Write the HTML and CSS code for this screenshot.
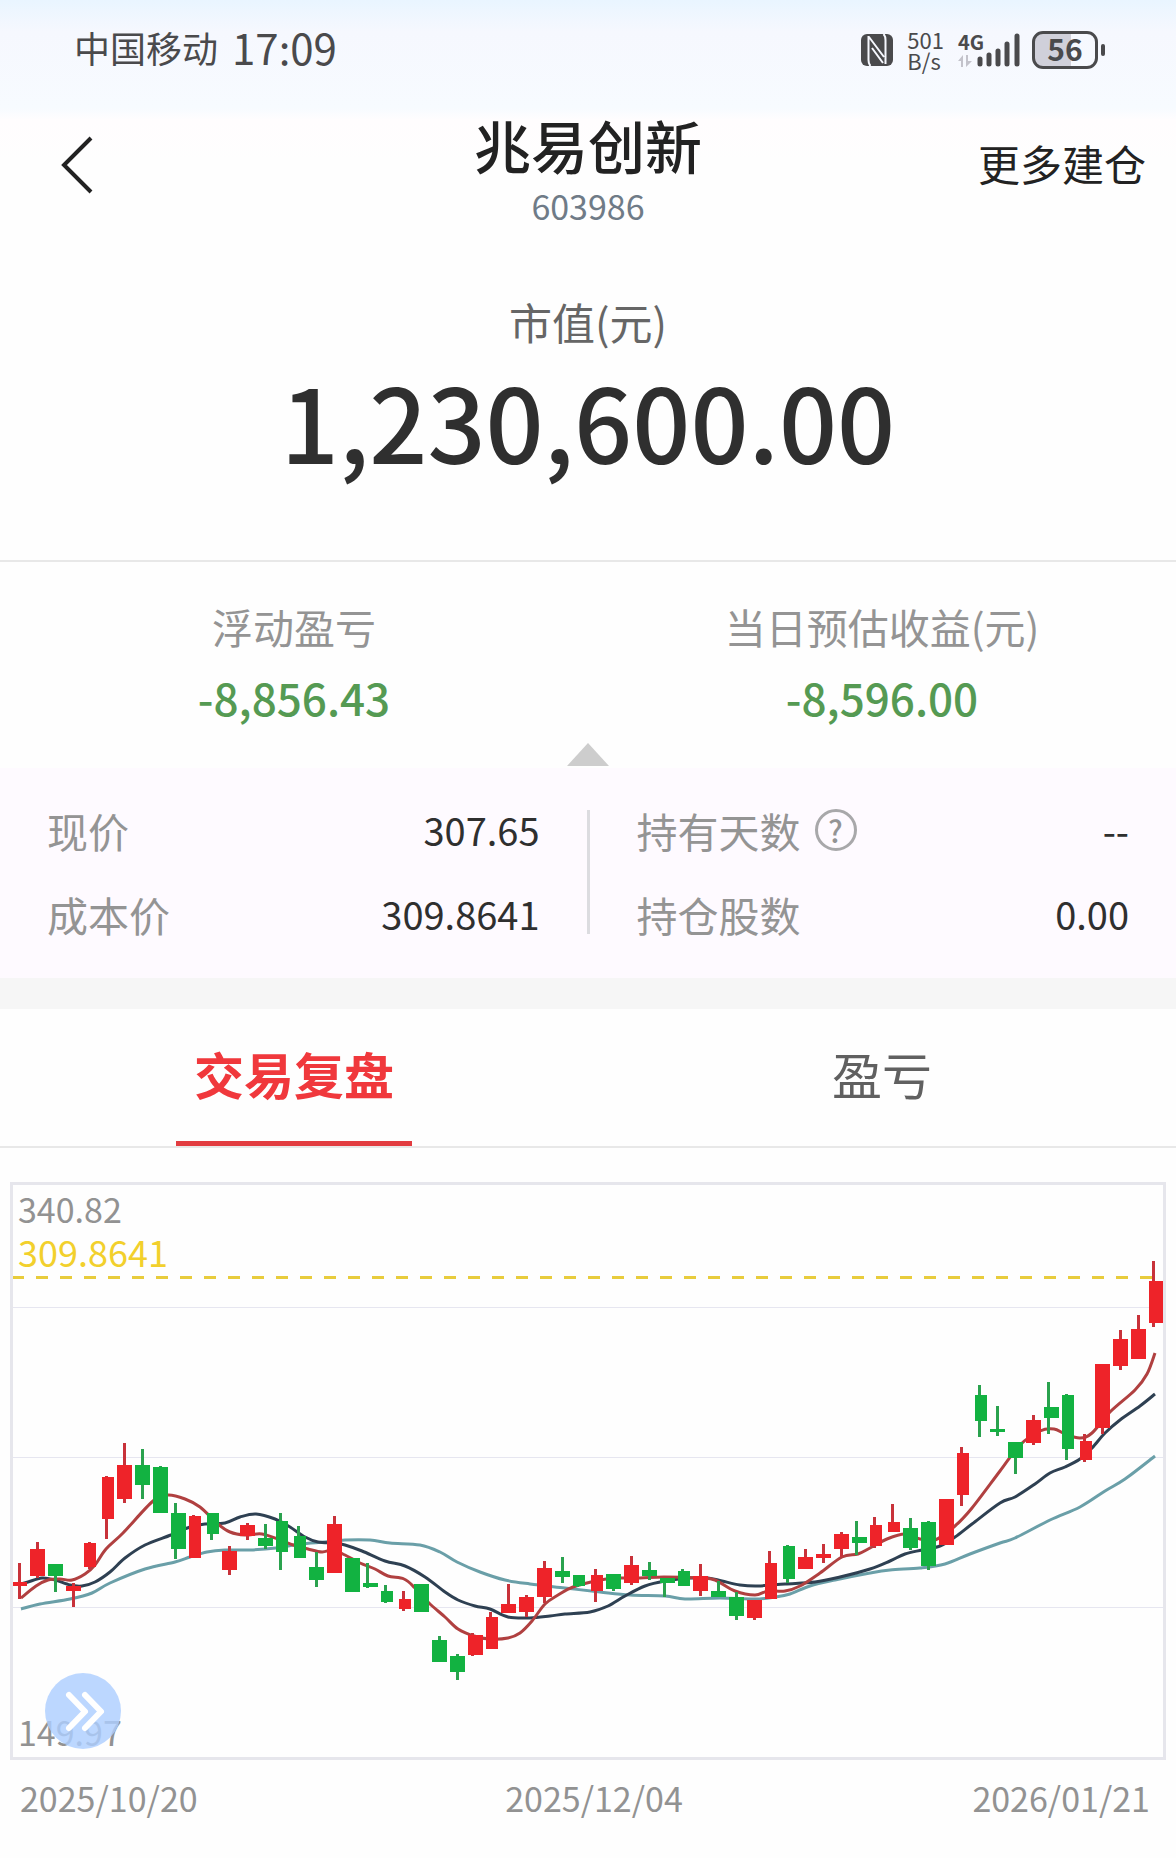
FILE: index.html
```html
<!DOCTYPE html>
<html lang="zh-CN">
<head>
<meta charset="utf-8">
<meta name="viewport" content="width=device-width, initial-scale=1">
<title>兆易创新 603986</title>
<link rel="stylesheet" href="styles.css">
</head>
<body>
<div class="top">
  <div class="status">
    <div class="status-left"><span class="carrier">中国移动</span><span class="clock">17:09</span></div>
    <div class="status-right">
      <svg class="nfc" viewBox="0 0 32 32" aria-hidden="true">
        <rect x="0" y="0" width="32" height="32" rx="6" fill="#4a4a4c"/>
        <path d="M7.500 2V26Q7.500 30 9.500 32M8 3L23 23M11 14L22 29M24.500 30V6Q24.500 2 22.500 0" fill="none" stroke="#f6f8fe" stroke-width="2"/>
      </svg>
      <div class="speed"><span>501</span><span>B/s</span></div>
      <div class="signal">
        <div class="net">
          <span>4G</span>
          <svg class="updown" viewBox="0 0 14 12" aria-hidden="true"><path d="M0 6L5 0V12H3V6ZM8 0H10V6H14L8 12Z" fill="#c3c3cb"/></svg>
        </div>
        <svg class="bars" viewBox="0 0 43 34" aria-hidden="true"><path d="M3 26V31M12 22V31M21 18V31M30 11V31M40 3V31" stroke="#4a4a4c" stroke-width="5" stroke-linecap="round"/></svg>
      </div>
      <div class="battery"><span class="cell">56</span><i class="nub"></i></div>
    </div>
  </div>
  <header class="header">
    <button class="back" type="button" aria-label="返回"><svg viewBox="0 0 32 58" aria-hidden="true"><path d="M30 2L3 29L30 56" fill="none" stroke="#222" stroke-width="4"/></svg></button>
    <div class="title"><h1>兆易创新</h1><p>603986</p></div>
    <a class="more" href="#more">更多建仓</a>
  </header>
</div>
<main>
  <section class="value">
    <p class="value-label">市值(元)</p>
    <p class="value-number">1,230,600.00</p>
  </section>
  <section class="profit">
    <div><p class="label">浮动盈亏</p><p class="loss">-8,856.43</p></div>
    <div><p class="label">当日预估收益(元)</p><p class="loss">-8,596.00</p></div>
    <svg class="fold" viewBox="0 0 42 23" aria-hidden="true"><path d="M21 0L42 23H0Z" fill="#cdcdcd"/></svg>
  </section>
  <section class="details">
    <dl>
      <div><dt>现价</dt><dd>307.65</dd></div>
      <div><dt>成本价</dt><dd>309.8641</dd></div>
    </dl>
    <i class="rule"></i>
    <dl>
      <div><dt>持有天数<button class="help" type="button" aria-label="持有天数说明">?</button></dt><dd>--</dd></div>
      <div><dt>持仓股数</dt><dd>0.00</dd></div>
    </dl>
  </section>
  <nav class="tabs" role="tablist">
    <button class="tab active" type="button" role="tab" aria-selected="true">交易复盘</button>
    <button class="tab" type="button" role="tab" aria-selected="false">盈亏</button>
  </nav>
  <section class="chart-area">
    <div class="chart">
      <svg id="chart" viewBox="13 1185 1150 572" role="img" aria-label="K线图"></svg>
      <div class="scale-top"><span>340.82</span><span class="cost">309.8641</span></div>
      <span class="scale-bottom">149.97</span>
      <button class="expand" type="button" aria-label="展开"><svg viewBox="0 0 76 76" aria-hidden="true"><path d="M24 22L40 38.500L24 55M40 22L56 38.500L40 55" fill="none" stroke="#fff" stroke-width="6" stroke-linecap="round" stroke-linejoin="round"/></svg></button>
    </div>
    <div class="dates"><span>2025/10/20</span><span>2025/12/04</span><span>2026/01/21</span></div>
  </section>
</main>
<script src="chart.js"></script>
</body>
</html>
```
FILE: styles.css
```css
* { box-sizing: border-box; }
body {
  margin: 0;
  background: #fefefe;
  color: #2f2f2f;
  font-family: "Noto Sans CJK SC", "Noto Sans", sans-serif;
}
h1, p, dl, dd { margin: 0; }
button {
  border: 0;
  padding: 0;
  background: none;
  color: inherit;
  font: inherit;
  cursor: pointer;
}
svg { display: block; }

.top { background: linear-gradient(#e9f5ff 0, #f6f8fe 32px, #f7fbff 108px, #fffdfe 120px, #fefefe 160px); }

/* Status bar */
.status {
  display: flex;
  justify-content: space-between;
  align-items: center;
  height: 100px;
  padding: 0 71px 0 74px;
  color: #4a4a4c;
}
.status-left { display: flex; align-items: center; gap: 14px; padding-bottom: 6px; }
.carrier { font-size: 36px; line-height: 48px; }
.clock { font-size: 42px; line-height: 48px; }
.status-right { display: flex; align-items: center; }
.nfc { width: 32px; height: 32px; margin-right: 14px; }
.speed {
  display: flex;
  flex-direction: column;
  margin-right: 14px;
  font-size: 22px;
  line-height: 21px;
}
.signal { display: flex; align-items: flex-end; margin-right: 12px; }
.net { display: flex; flex-direction: column; gap: 4px; width: 19px; font-size: 20px; font-weight: 700; line-height: 18px; }
.updown { width: 14px; height: 12px; }
.bars { width: 43px; height: 34px; }
.battery { display: flex; align-items: center; gap: 3px; }
.cell {
  width: 66px;
  height: 38px;
  border: 3px solid #4a4a4c;
  border-radius: 11px;
  background: linear-gradient(90deg, #d0d0da 36px, transparent 36px);
  font-size: 30px;
  font-weight: 700;
  line-height: 28px;
  text-align: center;
}
.nub { width: 4px; height: 12px; border-radius: 2px; background: #4a4a4c; }

/* Header */
.header {
  display: grid;
  grid-template-columns: 1fr auto 1fr;
  align-items: center;
  height: 130px;
  padding: 0 30px;
  color: #222;
}
.back { justify-self: start; margin-left: 31px; }
.back svg { width: 32px; height: 58px; }
.title { padding-top: 6px; text-align: center; }
.title h1 { font-size: 57px; font-weight: 500; line-height: 76px; }
.title p { color: #6f7b87; font-size: 34px; line-height: 48px; }
.more { justify-self: end; padding-bottom: 4px; color: #222; font-size: 42px; line-height: 60px; text-decoration: none; }

/* Market value */
.value { padding: 61px 0 71px; border-bottom: 2px solid #e8e8e8; text-align: center; }
.value-label { color: #666; font-size: 43px; line-height: 60px; }
.value-number { font-size: 102px; font-weight: 500; line-height: 138px; }

/* Profit */
.profit {
  position: relative;
  display: grid;
  grid-template-columns: 1fr 1fr;
  padding: 34px 0 30px;
  text-align: center;
}
.label { color: #949494; font-size: 41px; line-height: 60px; }
.loss { color: #559a53; font-size: 44px; font-weight: 500; line-height: 82px; }
.fold { position: absolute; bottom: 2px; left: 50%; width: 42px; height: 23px; margin-left: -21px; }

/* Details */
.details {
  display: grid;
  grid-template-columns: 1fr 3px 1fr;
  padding: 32px 0 34px;
  border-bottom: 31px solid #f6f6f6;
  background: #fefaff;
}
.details dl {
  display: flex;
  flex-direction: column;
  gap: 24px;
  padding: 0 47px;
}
.rule { margin: 10px 0; background: #dcdce0; }
.details dl > div { display: flex; justify-content: space-between; align-items: center; }
dt { display: flex; align-items: center; gap: 14px; color: #949494; font-size: 41px; line-height: 60px; }
dd { font-size: 38px; line-height: 60px; }
.help {
  width: 42px;
  height: 42px;
  border: 3px solid #a8a8aa;
  border-radius: 50%;
  font-size: 30px;
  font-weight: 500;
  line-height: 34px;
}

/* Tabs */
.tabs { display: grid; grid-template-columns: 1fr 1fr; border-bottom: 2px solid #e8e8e8; }
.tab {
  display: flex;
  flex-direction: column;
  align-items: center;
  height: 137px;
  padding-top: 28px;
  color: #606060;
  font-size: 50px;
  line-height: 72px;
}
.tab.active { color: #f0383c; font-weight: 700; }
.tab.active::after { content: ""; width: 40%; height: 5px; margin-top: auto; background: #e23c40; }

/* Chart */
.chart-area { padding: 34px 10px 32px; }
.chart { position: relative; border: 3px solid #e6e6ec; color: #929292; font-size: 34px; line-height: 43px; }
.chart > svg { width: 100%; height: auto; }
.scale-top { position: absolute; top: 2px; left: 5px; display: flex; flex-direction: column; }
.cost { color: #f2d02c; font-size: 36px; }
.scale-bottom { position: absolute; bottom: 4px; left: 5px; }
.expand {
  position: absolute;
  bottom: 8px;
  left: 32px;
  border-radius: 50%;
  background: rgba(173, 206, 255, 0.82);
}
.expand svg { width: 76px; height: 76px; }
.dates {
  display: grid;
  grid-template-columns: 27fr auto 26fr;
  padding: 14px 16px 0 10px;
  color: #929292;
  font-size: 34px;
  line-height: 48px;
}
.dates span:last-child { text-align: right; }
.grid { stroke: #e6e6f0; }
.cost-line { stroke: #e8cc3c; stroke-width: 3; stroke-dasharray: 12 12; }
.ma { fill: none; stroke-width: 3; }
.ma-5 { stroke: #b04040; }
.ma-10 { stroke: #2e4052; }
.ma-20 { stroke: #6a9fa8; }
.up { fill: #ee2329; }
.down { fill: #12b241; }
.up-wick { fill: #c8323a; }
.down-wick { fill: #2aa24e; }
```
FILE: chart.js
```javascript
// Each candle: direction, body x, body width, body top, body bottom, wick x, wick top, wick bottom
const candles = [
  ["up",12,15,1582,1586,18,1563,1599],["up",30,15,1549,1576,36,1542,1578],["down",48,15,1564,1576,54,1564,1592],
  ["up",66,15,1586,1591,72,1583,1607],["up",84,12,1543,1567,88,1542,1569],["up",102,12,1477,1519,105,1476,1539],
  ["up",117,15,1465,1499,123,1443,1503],["down",135,15,1465,1485,141,1449,1499],["down",153,15,1467,1513,159,1466,1513],
  ["down",171,15,1513,1549,174,1503,1559],["up",189,12,1516,1558,192,1515,1558],["down",207,12,1513,1534,210,1513,1540],
  ["up",222,15,1551,1570,228,1546,1575],["up",240,15,1525,1536,246,1523,1540],["down",258,15,1538,1546,264,1524,1549],
  ["down",276,12,1521,1552,279,1513,1570],["down",294,12,1536,1558,297,1526,1558],["down",309,15,1567,1580,315,1552,1587],
  ["up",327,15,1524,1573,333,1516,1573],["down",345,15,1558,1592,351,1558,1592],["down",363,15,1583,1587,366,1563,1588],
  ["down",381,12,1591,1602,384,1585,1603],["up",399,12,1599,1609,402,1591,1611],["down",414,15,1584,1612,420,1584,1612],
  ["down",432,15,1640,1662,438,1636,1662],["down",450,15,1656,1672,456,1654,1680],["up",468,15,1635,1655,471,1633,1656],
  ["up",486,12,1617,1649,489,1612,1649],["up",501,15,1604,1613,507,1584,1613],["up",519,15,1597,1612,525,1595,1617],
  ["up",537,15,1568,1597,543,1561,1603],["down",555,15,1571,1577,561,1557,1583],["down",573,12,1575,1586,576,1575,1587],
  ["up",591,12,1575,1591,594,1569,1602],["down",606,15,1574,1589,612,1574,1591],["up",624,15,1565,1583,630,1556,1585],
  ["down",642,15,1570,1576,648,1562,1580],["down",660,15,1578,1583,663,1578,1597],["down",678,12,1571,1586,681,1569,1586],
  ["up",693,15,1576,1591,699,1564,1596],["down",711,15,1591,1597,717,1581,1597],["down",729,15,1597,1616,735,1592,1620],
  ["up",747,15,1600,1618,753,1600,1620],["up",765,12,1563,1599,768,1551,1599],["down",783,12,1546,1579,786,1545,1583],
  ["up",798,15,1557,1569,804,1549,1569],["up",816,15,1554,1558,822,1544,1563],["up",834,15,1534,1549,840,1532,1557],
  ["down",852,15,1537,1543,855,1521,1555],["up",870,12,1525,1546,873,1517,1548],["up",888,12,1522,1532,891,1504,1532],
  ["down",903,15,1528,1548,909,1518,1550],["down",921,15,1522,1566,927,1521,1570],["up",939,15,1499,1545,945,1499,1545],
  ["up",957,12,1453,1495,960,1447,1506],["down",975,12,1395,1421,978,1385,1437],["down",990,15,1429,1432,996,1406,1436],
  ["down",1008,15,1442,1458,1014,1442,1474],["up",1026,15,1420,1443,1032,1415,1445],["down",1044,15,1407,1418,1047,1382,1434],
  ["down",1062,12,1395,1449,1065,1394,1460],["up",1080,12,1441,1460,1083,1434,1462],["up",1095,15,1364,1428,1101,1364,1434],
  ["up",1113,15,1339,1366,1119,1330,1370],["up",1131,15,1329,1359,1137,1315,1359],["up",1149,15,1281,1323,1152,1261,1327]
];

const averages = {
  "ma-20": [[21,1609],[40,1604],[70,1599],[92,1593],[110,1583],[145,1569],[175,1562],[190,1557],[207,1552],[225,1550],[250,1550],[276,1548],[300,1544],[325,1542],[345,1540],[370,1540],[390,1543],[420,1545],[440,1552],[457,1562],[480,1572],[505,1580],[530,1584],[565,1588],[600,1592],[630,1595],[665,1596],[685,1599],[720,1598],[755,1599],[775,1597],[790,1594],[810,1586],[835,1580],[870,1573],[890,1570],[920,1568],[945,1564],[970,1554],[1000,1543],[1015,1538],[1050,1520],[1080,1507],[1105,1491],[1125,1479],[1155,1456]],
  "ma-10": [[21,1584],[28,1582],[42,1578],[55,1580],[70,1585],[82,1586],[95,1582],[110,1572],[125,1558],[145,1545],[171,1535],[190,1527],[205,1524],[225,1523],[240,1517],[256,1514],[275,1519],[290,1527],[305,1537],[318,1542],[335,1543],[345,1545],[362,1551],[385,1561],[405,1566],[425,1577],[445,1592],[458,1600],[475,1606],[490,1609],[508,1617],[530,1618],[550,1616],[565,1614],[590,1612],[608,1606],[625,1596],[645,1586],[665,1581],[690,1578],[708,1578],[722,1581],[740,1585],[758,1586],[785,1584],[815,1582],[840,1577],[870,1569],[890,1561],[905,1554],[922,1550],[940,1546],[955,1537],[972,1524],[1000,1503],[1015,1497],[1035,1484],[1050,1473],[1065,1467],[1080,1459],[1092,1448],[1105,1433],[1120,1420],[1140,1406],[1155,1394]],
  "ma-5": [[21,1598],[36,1586],[48,1580],[60,1579],[72,1580],[85,1574],[95,1565],[106,1549],[123,1533],[153,1501],[168,1495],[185,1499],[200,1507],[218,1524],[230,1532],[245,1535],[262,1534],[280,1540],[293,1545],[308,1549],[322,1552],[333,1550],[345,1555],[360,1563],[375,1569],[388,1576],[404,1579],[415,1588],[429,1603],[445,1617],[458,1629],[474,1636],[490,1639],[508,1638],[520,1633],[532,1621],[545,1604],[558,1595],[573,1587],[600,1580],[618,1578],[640,1578],[664,1577],[700,1578],[715,1580],[735,1591],[755,1595],[768,1591],[785,1591],[800,1586],[820,1573],[842,1557],[858,1554],[870,1548],[887,1539],[905,1534],[920,1539],[935,1540],[955,1526],[972,1508],[1000,1471],[1020,1445],[1040,1431],[1054,1429],[1065,1434],[1080,1438],[1092,1433],[1110,1412],[1135,1390],[1147,1374],[1155,1353]]
};

const svg = document.getElementById("chart");

function add(name, attributes) {
  const node = document.createElementNS("http://www.w3.org/2000/svg", name);
  for (const key in attributes) node.setAttribute(key, attributes[key]);
  svg.appendChild(node);
}

// Smooth curve through all points
function curve(points) {
  let d = `M${points[0]}`;
  for (let i = 0; i < points.length - 1; i++) {
    const a = points[i - 1] || points[i];
    const b = points[i];
    const c = points[i + 1];
    const e = points[i + 2] || c;
    d += `C${b[0] + (c[0] - a[0]) / 6},${b[1] + (c[1] - a[1]) / 6} ${c[0] - (e[0] - b[0]) / 6},${c[1] - (e[1] - b[1]) / 6} ${c}`;
  }
  return d;
}

for (const y of [1307.5, 1457.5, 1607.5]) add("line", { class: "grid", x1: 13, x2: 1163, y1: y, y2: y });
add("line", { class: "cost-line", x1: 12, x2: 1163, y1: 1277.5, y2: 1277.5 });
for (const name in averages) add("path", { class: `ma ${name}`, d: curve(averages[name]) });
for (const [kind, x, width, top, bottom, wickX, wickTop, wickBottom] of candles) {
  add("rect", { class: `${kind}-wick`, x: wickX, y: wickTop, width: 3, height: wickBottom - wickTop });
  add("rect", { class: kind, x, y: top, width, height: bottom - top });
}
```
